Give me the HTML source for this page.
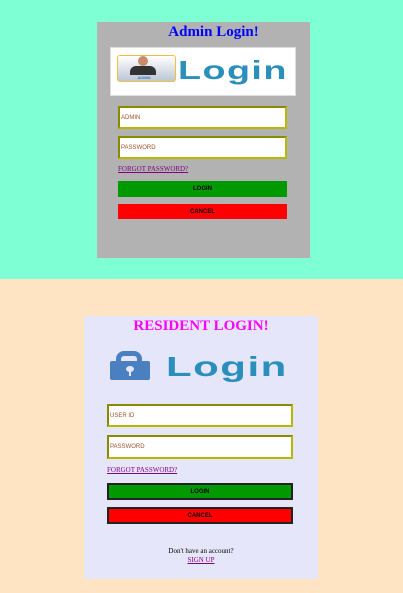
<!DOCTYPE html>
<html><head><style>
body{margin:0;width:403px;height:593px;overflow:hidden;font-family:"Liberation Serif",serif;}
.top{position:absolute;left:0;top:0;width:403px;height:279px;background:#7fffd4}
.bot{position:absolute;left:0;top:279px;width:403px;height:314px;background:#ffe4c4}
.a{position:absolute;left:97px;top:22px;width:213px;height:236px;background:#b2b2b2}
.r{position:absolute;left:84px;top:316px;width:234px;height:263px;background:#e6e6fa}
.abs{position:absolute}
.in{position:absolute;background:#fff;border:2px solid #b8b800;border-top-color:#8a8a00;border-left-color:#8a8a00;box-sizing:border-box;font:6px "Liberation Sans",sans-serif;color:#a0522d;padding-left:1px;display:flex;align-items:center}
.btn{position:absolute;font:bold 6px "Liberation Sans",sans-serif;color:#000;text-align:center;box-sizing:border-box;display:flex;align-items:center;justify-content:center}
.lnk{position:absolute;font-size:7px;color:#800080;text-decoration:underline}
.lg{position:absolute;font:bold 26px 'Liberation Sans',sans-serif;color:#2b8fbc;letter-spacing:1px;transform-origin:0 0;transform:scaleX(1.45);line-height:30px}
</style></head><body>
<div class="top"></div><div class="bot"></div>
<div class="a"></div>
<div class="abs" style="left:97px;top:24px;text-align:center;font-weight:bold;font-size:15px;color:#0000ff;width:233px">Admin Login!</div>
<div class="abs" style="left:110px;top:47px;width:186px;height:49px;background:#fff;border:1px solid #ddd;box-sizing:border-box"></div>
<div class="abs" style="left:117px;top:55px;width:57px;height:25px;border:1px solid #f0c040;border-radius:3px;background:linear-gradient(#fff,#bcc6d6)"></div>
<div class="abs" style="left:138px;top:56px;width:10px;height:10px;border-radius:50%;background:#c88b6c"></div>
<div class="abs" style="left:130px;top:66px;width:26px;height:9px;border-radius:6px 6px 0 0;background:#333"></div>
<div class="abs" style="left:128px;top:75px;width:32px;font:bold 4px 'Liberation Sans',sans-serif;color:#3a7fc0;text-align:center">ADMIN</div>
<div class="lg" style="left:178px;top:55px">Login</div>
<div class="in" style="left:118px;top:106px;width:169px;height:23px">ADMIN</div>
<div class="in" style="left:118px;top:136px;width:169px;height:23px">PASSWORD</div>
<div class="lnk" style="left:118px;top:165px">FORGOT PASSWORD?</div>
<div class="btn" style="left:118px;top:181px;width:169px;height:16px;background:#009900">LOGIN</div>
<div class="btn" style="left:118px;top:204px;width:169px;height:15px;background:#ff0000">CANCEL</div>

<div class="r"></div>
<div class="abs" style="left:84px;top:318px;width:234px;text-align:center;font-weight:bold;font-size:15px;color:#ff00ff">RESIDENT LOGIN!</div>
<div class="abs" style="left:116px;top:351px;width:26px;height:18px;border:5px solid #4a7fc0;border-bottom:none;border-radius:8px 8px 0 0;box-sizing:border-box"></div>
<div class="abs" style="left:110px;top:361px;width:40px;height:19px;background:#4a7fc0;border-radius:2px"></div>
<div class="abs" style="left:126px;top:366px;width:8px;height:6px;border-radius:50%;background:#e6e6fa"></div>
<div class="abs" style="left:129px;top:370px;width:2px;height:6px;background:#e6e6fa"></div>
<div class="lg" style="left:166px;top:352px;font-size:28px;transform:scaleX(1.5)">Login</div>
<div class="in" style="left:107px;top:404px;width:186px;height:23px">USER ID</div>
<div class="in" style="left:107px;top:435px;width:186px;height:24px">PASSWORD</div>
<div class="lnk" style="left:107px;top:466px">FORGOT PASSWORD?</div>
<div class="btn" style="left:107px;top:483px;width:186px;height:17px;background:#009900;border:2px solid #222">LOGIN</div>
<div class="btn" style="left:107px;top:507px;width:186px;height:17px;background:#ff0000;border:2px solid #222">CANCEL</div>
<div class="abs" style="left:84px;top:547px;width:234px;text-align:center;font-size:7px;color:#000">Don't have an account?</div>
<div class="abs" style="left:84px;top:556px;width:234px;text-align:center;font-size:7px;color:#800080;text-decoration:underline">SIGN UP</div>
</body></html>
